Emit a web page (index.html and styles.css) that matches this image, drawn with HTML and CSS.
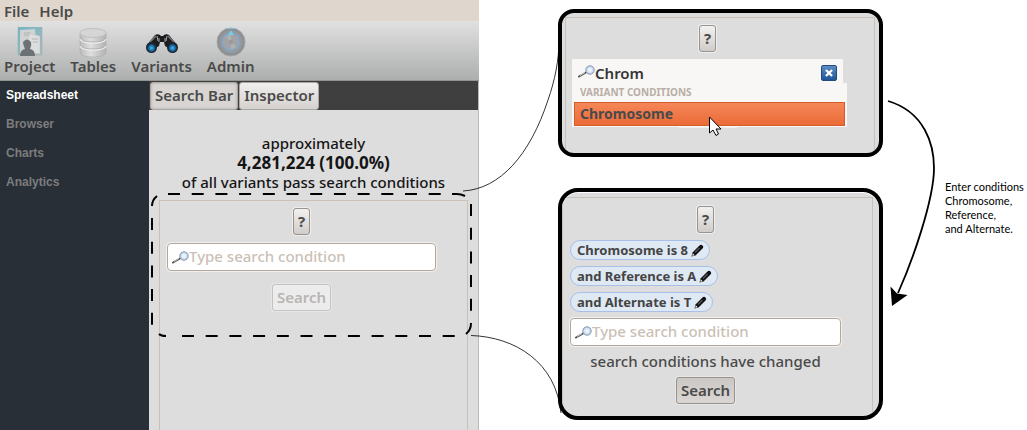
FILE: index.html
```
<!DOCTYPE html>
<html lang="en">
<head>
<meta charset="utf-8">
<title>Variant search</title>
<link rel="stylesheet" href="styles.css">
</head>
<body>
<svg class="defs" width="0" height="0" aria-hidden="true">
  <defs>
    <linearGradient id="silver" x1="0" x2="1"><stop offset="0" stop-color="#bcbcbc"/><stop offset=".4" stop-color="#dedede"/><stop offset="1" stop-color="#b2b2b2"/></linearGradient>
    <linearGradient id="folder" x1="0" x2="1" y2="1"><stop offset="0" stop-color="#6fb6c4"/><stop offset="1" stop-color="#a7b9bc"/></linearGradient>
    <radialGradient id="lens"><stop offset="0" stop-color="#4fb4ee"/><stop offset=".6" stop-color="#1b70ad"/><stop offset="1" stop-color="#0c3049"/></radialGradient>
    <radialGradient id="glass"><stop offset="0" stop-color="#fff"/><stop offset="1" stop-color="#b9cfe8"/></radialGradient>
    <symbol id="magnifier" viewBox="0 0 17 13">
      <path d="M1 11.500 8 7.500" stroke="#555" stroke-width="2" stroke-linecap="round"/>
      <path d="M2 10.500 7 7.500" stroke="#ccc" stroke-width="1"/>
      <ellipse cx="12" cy="5" rx="4.200" ry="4.200" fill="url(#glass)" stroke="#8298b4"/>
    </symbol>
    <symbol id="pencil" viewBox="0 0 13 13">
      <path d="M.5 12.500 1.500 8.500 8.500 1.500Q10 0 11.500 1.500T11.500 4.500L4.500 11.500Z" fill="#111"/>
      <path d="M4 8.500 8.500 4" stroke="#555" stroke-width="1.500"/>
      <path d="M1.800 9.300 3.700 11.200 1.300 11.700Z" fill="#fff"/>
    </symbol>
  </defs>
</svg>
<div class="figure">
  <section class="app">
    <div class="menubar"><button type="button">File</button><button type="button">Help</button></div>
    <div class="toolbar">
      <button type="button">
        <svg viewBox="0 0 30 30"><path d="M3 0H27V28H3Z" fill="url(#folder)" stroke="#9fb0b3" stroke-width=".6"/><path d="M5 3 20 2 22 26H5Z" fill="#cfd3d3"/><path d="M13 6 25 9 25 27 13 26Z" fill="#dcdddd" stroke="#bbb" stroke-width=".5"/><path d="M9 6H15M9 8H15M17 12H23M18 15H23" stroke="#b4b4b4"/><path d="M5 29Q5 23 10 22Q8 18 8 15Q12 10 16 15Q17 18 15 22Q20 23 20 29Z" fill="#6b7174"/></svg>
        Project</button>
      <button type="button">
        <svg viewBox="0 0 30 30"><path d="M2 6V25Q2 30 15 30T28 25V6Z" fill="url(#silver)" stroke="#aaa" stroke-width=".6"/><ellipse cx="15" cy="6" rx="13" ry="4.500" fill="#d5d5d5" stroke="#c0c0c0"/><path d="M2 12Q4 16 15 16T28 12M2 19Q4 23 15 23T28 19" fill="none" stroke="#f0f0f0" stroke-width="1.500"/><path d="M2 11Q4 15 15 15T28 11M2 18Q4 22 15 22T28 18" fill="none" stroke="#aaa" stroke-width=".8"/></svg>
        Tables</button>
      <button type="button">
        <svg class="wide" viewBox="0 0 34 30"><path d="M2 18 10 8Q14 6 16 9H18Q20 6 24 8L32 18 28 24 20 19 19 15H15L14 19 6 24Z" fill="#1b1d20"/><path d="M5 15 11 9M23 9 29 15M14 11V15M20 11V15" stroke="#777" stroke-width="1.500"/><path d="M12 9 13 14M22 9 21 14" stroke="#aaa"/><circle cx="6.500" cy="20.500" r="5.500" fill="#22262a"/><circle cx="27.500" cy="20.500" r="5.500" fill="#22262a"/><circle cx="6.500" cy="21" r="4.300" fill="url(#lens)"/><circle cx="27.500" cy="21" r="4.300" fill="url(#lens)"/></svg>
        Variants</button>
      <button type="button">
        <svg viewBox="0 0 30 30"><circle cx="15" cy="15" r="14" fill="#8b8f92" stroke="#a3a6a8"/><circle cx="15" cy="15" r="11.500" fill="#96999b"/><circle cx="15" cy="15" r="8.500" fill="#a2a3a4" stroke="#7fa9d0" stroke-width="1.300"/><path d="M15 15 10 10A7 7 0 0 1 15 8ZM15 15 20 20A7 7 0 0 1 15 22Z" fill="#b0b1b1"/><circle cx="15" cy="15" r="2" fill="#999"/><path d="M15 3 17.500 8H12.500Z" fill="#6fd3ee"/><path d="M11 1.500H19" stroke="#7fc3dc"/></svg>
        Admin</button>
    </div>
    <div class="workspace">
      <nav class="sidebar"><a class="current" href="#">Spreadsheet</a><a href="#">Browser</a><a href="#">Charts</a><a href="#">Analytics</a></nav>
      <main class="main">
        <div class="tabs"><button class="tab pressed" type="button">Search Bar</button><button class="tab" type="button">Inspector</button></div>
        <p class="summary">approximately<br><strong>4,281,224 (100.0%)</strong><br>of all variants pass search conditions</p>
        <div class="panel">
          <button class="help" type="button">?</button>
          <label class="field"><svg><use href="#magnifier"/></svg><input type="text" placeholder="Type search condition" aria-label="Search condition"></label>
          <button class="search" type="button" disabled>Search</button>
        </div>
      </main>
    </div>
  </section>
  <div class="steps">
    <section class="callout first">
      <div class="panel">
        <button class="help" type="button">?</button>
        <label class="field plain"><svg><use href="#magnifier"/></svg><input type="text" value="Chrom" aria-label="Search condition"><button class="clear" type="button" aria-label="Clear"><svg viewBox="0 0 16 16"><path d="M4.500 4.500 11.500 11.500M11.500 4.500 4.500 11.500" stroke="#fff" stroke-width="2.600"/></svg></button></label>
        <div class="suggestions"><h2>VARIANT CONDITIONS</h2><button type="button">Chromosome</button></div>
        <span class="edge"></span>
      </div>
    </section>
    <section class="callout second">
      <div class="panel">
        <button class="help" type="button">?</button>
        <div class="chips">
          <button class="chip" type="button">Chromosome is 8<svg><use href="#pencil"/></svg></button>
          <button class="chip" type="button">and Reference is A<svg><use href="#pencil"/></svg></button>
          <button class="chip" type="button">and Alternate is T<svg><use href="#pencil"/></svg></button>
        </div>
        <label class="field"><svg><use href="#magnifier"/></svg><input type="text" placeholder="Type search condition" aria-label="Search condition"></label>
        <p class="status">search conditions have changed</p>
        <button class="search" type="button">Search</button>
      </div>
    </section>
  </div>
  <p class="note">Enter conditions<br>Chromosome,<br>Reference,<br>and Alternate.</p>
  <svg class="links" viewBox="0 0 1027 430" preserveAspectRatio="none" aria-hidden="true">
    <g fill="none" stroke="#000">
      <g stroke-width="2">
        <path d="M168 194H452" stroke-dasharray="12 11.700"/>
        <path d="M452 194H457Q461 194 465 196M152 206Q152 200 157 196M471 323Q471 330 466 334M159 334Q161 336 166 336"/>
        <path d="M152 218V326M471 204V312" stroke-dasharray="12 11.700"/>
        <path d="M182 336H456" stroke-dasharray="12 11.700"/>
      </g>
      <path d="M463 191C500 189 530 155 548 100C555 80 559 60 559 40" stroke-width=".8"/>
      <path d="M471 335.500C515 337 556 362 561 413" stroke-width=".8"/>
      <path d="M888 101C925 112 934 145 934 168C934 200 912 262 898 293" stroke-width="1.800"/>
    </g>
    <path d="M890.500 286.500 897 293.500 907.500 295 892 306Z"/>
    <path d="M709.500 117V133L713 130 716 135.500 718.500 134 716 129H721Z" fill="#fff" stroke="#000"/>
  </svg>
</div>
</body>
</html>
```
FILE: styles.css
```
* { box-sizing: border-box; }
body { margin: 0; background: #fff; color: #4a4a4a; font: 500 15px/20px "Noto Sans", sans-serif; }
button, input { font: inherit; color: inherit; border: 0; background: none; padding: 0; margin: 0; }
button { font-weight: 600; }
p, h2 { margin: 0; }
.defs { position: absolute; }

.figure { position: relative; display: grid; grid-template-columns: 479fr 79fr 325fr 62fr 82fr; min-height: 100vh; }
.links { position: absolute; inset: 0; width: 100%; height: 100%; pointer-events: none; }

.app { grid-column: 1; display: flex; flex-direction: column; }
.menubar { display: flex; gap: 10px; height: 21px; padding: 0 4px; background: #dfd7cd; }
.toolbar { display: flex; gap: 15px; height: 60px; padding: 6px 4px 0; background: linear-gradient(#e0e1e0, #adafae); border-bottom: 1px solid #929492; }
.toolbar button { display: flex; flex-direction: column; align-items: center; line-height: 18px; }
.toolbar svg { width: 30px; height: 30px; }
.toolbar .wide { width: 34px; }
.workspace { flex: 1; display: grid; grid-template-columns: 149px 1fr; }
.sidebar { display: flex; flex-direction: column; gap: 13px; padding: 6px; background: #282f37; font: bold 12px/16px "Liberation Sans", sans-serif; }
.sidebar a { color: #7d7d7d; text-decoration: none; }
.sidebar .current { color: #fff; }

.main { display: flex; flex-direction: column; background: #ddd; border-right: 1px solid #bbb; }
.tabs { display: flex; gap: 1px; height: 29px; padding: 0 1px; background: #3f3f3f; }
.tab { height: 28px; margin-top: 1px; padding: 0 4px 2px; border: 1px solid #aaa6a2; border-radius: 3px; background: linear-gradient(#f0efee, #d5d1ce); }
.pressed { background: #d8d5d3; box-shadow: inset 0 0 3px #aaa; }
.summary { margin: 24px 0 8px; text-align: center; color: #151515; line-height: 19px; }
.summary strong { font-weight: 700; font-size: 17px; }

.panel { flex: 1; display: flex; flex-direction: column; align-items: center; margin: 0 10px; padding: 7px 31px 0 7px; border: 1px solid #c9c1b8; border-bottom: 0; }
.help { width: 17px; height: 27px; padding-bottom: 2px; border: 1px solid #99938e; border-radius: 3px; background: linear-gradient(#f2f1f0, #d0ccca); box-shadow: 0 0 0 1px #eee; font-weight: 700; }
.field { display: flex; align-items: center; width: 100%; height: 28px; margin-top: 8px; padding: 0 4px; border: 1px solid #b3a69b; border-radius: 4px; background: #fff; box-shadow: 0 0 0 1px #f2f0ee; }
.field > svg { flex: none; width: 17px; height: 13px; }
.field input { flex: 1; min-width: 0; padding-bottom: 2px; outline: 0; }
.field input::placeholder { color: #cbbfb6; opacity: 1; }
.search { width: 59px; height: 27px; margin-top: 13px; padding-bottom: 1px; border: 1px solid #99938e; border-radius: 3px; background: linear-gradient(#cbc7c4, #dad6d4); box-shadow: 0 0 0 1px #e6e6e6; }
.search:disabled { color: #b9b5b2; border-color: #c5c3c1; background: #ececec; }

.steps { grid-column: 3; display: flex; flex-direction: column; padding: 9px 0 10px; }
.callout { display: flex; border: 4px solid #000; border-radius: 16px; background: #ddd; overflow: hidden; }
.first { height: 148px; margin-bottom: 31px; }
.first .panel { margin: 4px 4px 0 3px; padding: 7px 31px 0 6px; }
.plain { height: 24px; margin-top: 7px; padding: 0 6px; border: 0; border-radius: 0; background: #f8f7f6; box-shadow: none; color: #353535; }
.plain input { padding: 4px 0 0; font-weight: 600; }
.clear { width: 16px; height: 16px; margin-top: 4px; border-radius: 2px; border: 1px solid #204a80; background: linear-gradient(#5c8cc4, #1f5596); }
.clear svg { display: block; width: 14px; height: 14px; }
.suggestions { align-self: stretch; margin-right: -4px; padding: 0 2px 1px; background: #f8f7f6; }
.suggestions h2 { padding-left: 6px; font-size: 10px; line-height: 19px; font-weight: 700; color: #b9aea5; }
.suggestions button { display: block; width: 100%; height: 24px; padding-left: 5px; border: 1px solid #d45c2b; background: linear-gradient(#f68658, #ea6b38); text-align: left; font-size: 14px; font-weight: 700; }
.edge { width: 58px; height: 1px; background: #eee; }

.second { height: 232px; border-radius: 20px; box-shadow: inset 0 1px #fff; }
.second .panel { margin: 5px 6px 0 0; padding: 8px 31px 0 7px; }
.chips { align-self: stretch; display: flex; flex-direction: column; align-items: flex-start; gap: 6px; margin-top: 7px; }
.chip { display: flex; align-items: center; gap: 3px; height: 20px; padding: 0 5px 0 6px; border: 1px solid #a9bfe8; border-radius: 10px; background: #dfe9f4; font-size: 13px; font-weight: 700; color: #444; }
.chip svg { width: 13px; height: 13px; }
.second .field { margin-top: 6px; }
.status { margin-top: 5px; }
.second .search { margin-top: 6px; }

.note { grid-column: 5; margin-top: 180px; color: #000; font: 400 11px/14px Lato, sans-serif; white-space: nowrap; }
```
